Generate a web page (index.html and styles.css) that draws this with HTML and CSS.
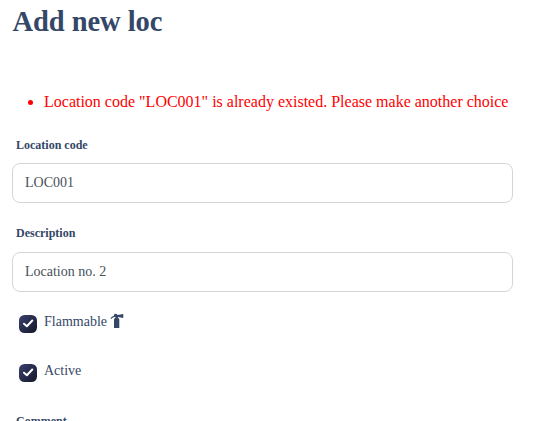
FILE: index.html
```html
<!DOCTYPE html>
<html lang="en">
<head>
<meta charset="utf-8">
<title>Add new loc</title>
<link rel="stylesheet" href="styles.css">
</head>
<body>
<main class="page">
  <h1 class="title">Add new loc</h1>
  <ul class="errors"><li>Location code "LOC001" is already existed. Please make another choice</li></ul>
  <form class="form">
    <label class="label" for="code">Location code</label>
    <input class="input" id="code" type="text" value="LOC001">
    <label class="label label-next" for="desc">Description</label>
    <input class="input" id="desc" type="text" value="Location no. 2">
    <div class="check">
      <span class="box"><svg viewBox="0 0 18 18"><path d="M5 8.700 7.900 11.200 13.300 5.500"/></svg></span>
      <span class="text">Flammable</span>
      <svg class="extinguisher" viewBox="0 0 14 16"><path d="M13.300 1v4L8 4.100V5C9 5.300 9.300 6 9.300 7v8H4V7c0-1 .4-1.700 1.400-2v-.9C3.800 4.100 2.400 4.600 1.400 6L.5 5.300C1.400 4 2.500 3.300 3.900 3 3.600 1.800 4.500.8 5.700.8c.8 0 1.400.4 1.800 1.100z"/></svg>
    </div>
    <div class="check">
      <span class="box"><svg viewBox="0 0 18 18"><path d="M5 8.700 7.900 11.200 13.300 5.500"/></svg></span>
      <span class="text">Active</span>
    </div>
    <label class="label label-last">Comment</label>
  </form>
</main>
</body>
</html>
```
FILE: styles.css
```css
* { box-sizing: border-box; }
body { margin: 0; height: 421px; overflow: hidden; background: #fff; color: #344767; font-family: "Liberation Serif", serif; }
.page { width: 513px; height: 421px; overflow: hidden; padding: 4px 0 0 12px; }
.title { margin: 0; padding-left: 0.5px; font-size: 28.5px; line-height: 36px; font-weight: 700; letter-spacing: -0.05px; }
.errors { margin: 50px 0 0; padding-left: 32px; color: #f00; font-size: 16px; line-height: 24px; white-space: nowrap; }
.form { display: flex; flex-direction: column; }
.label { margin: 22px 0 9px 4px; font-size: 12px; line-height: 18px; font-weight: 700; }
.label-next { margin-top: 21px; margin-bottom: 10px; }
.label-last { margin-top: 22px; margin-bottom: 0; }
.input { width: 501px; height: 40px; padding: 0 12px; border: 1px solid #d2d6da; border-radius: 8px; font: 14px/20px "Liberation Serif", serif; color: #495057; }
.check { display: flex; align-items: flex-start; height: 29px; margin-top: 20px; padding-left: 7px; font-size: 14px; }
.box { width: 18px; height: 18px; margin: 3px 7px 0 0; border-radius: 5.5px; background: linear-gradient(310deg, #141727, #3a416f); }
.box svg { display: block; fill: none; stroke: #fff; stroke-width: 2; stroke-linecap: round; stroke-linejoin: round; }
.text { line-height: 20px; }
.extinguisher { width: 14px; height: 16px; margin: 1px 0 0 3px; fill: #344767; }
```
